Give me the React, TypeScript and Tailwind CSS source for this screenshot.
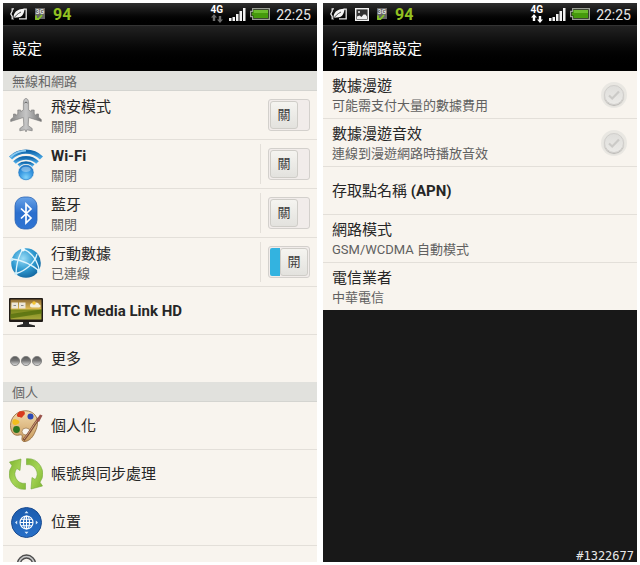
import type { ReactNode } from "react";
import { useState } from "react";

/* ---------- status bar icons ---------- */

function LeafBatteryIcon() {
  return (
    <svg width="17" height="12" viewBox="0 0 17 12" aria-hidden="true">
      <path d="M4 .8H2.2v2.400L.8 6l1.400 2.500v2.300H4M13.500 1.200h2.700v9.600H9" fill="none" stroke="#e8e8e8" strokeWidth="1.300" />
      <path d="M3.600 10.200C3.200 5 6.500 1 14.500.800 14.300 6.500 11.500 10 5.800 9.500Z" fill="#f5f5f5" />
      <path d="M3 11.500C5 8 7.500 5.800 11 4" stroke="#222" strokeWidth=".8" fill="none" />
    </svg>
  );
}

function PictureIcon() {
  return (
    <svg width="14" height="13" viewBox="0 0 14 13" aria-hidden="true">
      <rect x=".7" y=".7" width="12.600" height="11.600" fill="#333" stroke="#f2f2f2" strokeWidth="1.400" />
      <path d="M2 11V8.500L4.500 7.500l2 1.500 2-2.500h2L12 8.500V11Z" fill="#f2f2f2" />
      <circle cx="4" cy="4" r="1" fill="#f2f2f2" />
    </svg>
  );
}

function NetworkCheckIcon() {
  return (
    <svg width="10" height="12" viewBox="0 0 10 12" aria-hidden="true">
      <rect width="10" height="11" fill="#666" />
      <text x="0.5" y="6" fontSize="7" fontWeight="700" fill="#ddd" fontFamily="Roboto, sans-serif">3G</text>
      <path d="M1 7.500v3.500h2.500L7 7" fill="none" stroke="#86c22a" strokeWidth="1.800" />
    </svg>
  );
}

function DataArrowsIcon({ active }: { active: boolean }) {
  return (
    <svg width="12" height="9" viewBox="0 0 12 9" fill={active ? "#fff" : "#6d6d6d"} aria-hidden="true">
      <path d="M3 0 6 3.500H4.200V7H1.800V3.500H0Z" />
      <path d="M9 9 12 5.500h-1.800V2H7.800v3.500H6Z" />
    </svg>
  );
}

function SignalIcon() {
  return (
    <svg width="17" height="13" viewBox="0 0 17 13" fill="#f2f2f2" aria-hidden="true">
      <rect x="0" y="10" width="2.500" height="3" />
      <rect x="3.500" y="9" width="2.500" height="4" />
      <rect x="7" y="6" width="2.500" height="7" />
      <rect x="10.500" y="3" width="2.500" height="10" />
      <rect x="14" y="0" width="2.500" height="13" />
    </svg>
  );
}

function BatteryIcon() {
  return (
    <svg width="20" height="12" viewBox="0 0 20 12" aria-hidden="true">
      <path d="M2.600.600h16.800v10.800H2.600V8.600H.600V3.400h2Z" fill="#1c2a10" stroke="#9a9f96" strokeWidth="1.200" />
      <rect x="3.500" y="2" width="14.500" height="8" fill="#459a0c" />
      <rect x="3.500" y="2" width="14.500" height="3" fill="#6cbd2e" />
      <rect x="2" y="4.500" width="2" height="3" fill="#459a0c" />
    </svg>
  );
}

/* ---------- list icons ---------- */

function IconFrame({ children }: { children: ReactNode }) {
  return (
    <svg width="34" height="34" viewBox="0 0 34 34" className="shrink-0" aria-hidden="true">
      {children}
    </svg>
  );
}

function PlaneIcon() {
  return (
    <IconFrame>
      <defs>
        <linearGradient id="plane" x1="0" x2="1">
          <stop offset="0" stopColor="#868686" />
          <stop offset=".5" stopColor="#c6c6c6" />
          <stop offset="1" stopColor="#747474" />
        </linearGradient>
      </defs>
      <path
        d="M17 .500c1.700 0 2.600 2 2.600 4.500v6.800l2.700 2V12h2.900v4l2.300 1.600V16h2v3.200l2.800 2.300v2L19.700 19.500 19.200 27.500l4 3V32.800L17.700 31.800 17 34l-.700-2.200-5.500 1v-2.300l4-3-.500-8L1.700 23.500v-2l2.800-2.300V16h2v1.600L8.800 16v-4h2.900v1.800l2.700-2V5C14.400 2.500 15.300.500 17 .500Z"
        fill="url(#plane)" stroke="#777" strokeWidth=".6"
      />
      <path d="M15.500 5 17 4l1.500 1" stroke="#555" strokeWidth=".9" fill="none" />
    </IconFrame>
  );
}

function WifiIcon() {
  return (
    <IconFrame>
      <defs>
        <linearGradient id="wave" x1="0" y1="0" x2="0" y2="1">
          <stop offset="0" stopColor="#1269ae" />
          <stop offset="1" stopColor="#4aa8e4" />
        </linearGradient>
        <radialGradient id="ball" cx=".5" cy=".8" r=".8">
          <stop offset="0" stopColor="#7fd2fb" />
          <stop offset=".5" stopColor="#3a9ae2" />
          <stop offset="1" stopColor="#1f74c2" />
        </radialGradient>
      </defs>
      <g fill="none" stroke="url(#wave)">
        <path d="M1.500 11A22 22 0 0 1 32.500 11" strokeWidth="4.400" />
        <path d="M5.500 15.500A16.500 16.500 0 0 1 28.500 15.500" strokeWidth="3.800" />
        <path d="M9.500 18.500A11.500 11.500 0 0 1 24.500 18.500" strokeWidth="3" />
      </g>
      <path d="M1.500 10.200A22 22 0 0 1 17 3.600" fill="none" stroke="#8cccf2" strokeWidth="1.600" />
      <circle cx="17" cy="25.500" r="8" fill="url(#ball)" stroke="#f8f4ee" strokeWidth="1" />
      <circle cx="17" cy="25.500" r="7.300" fill="none" stroke="#2a7cc4" strokeWidth=".6" />
      <ellipse cx="17" cy="22.300" rx="4.600" ry="2.600" fill="#fff" opacity=".35" />
    </IconFrame>
  );
}

function BluetoothIcon() {
  return (
    <IconFrame>
      <defs>
        <linearGradient id="bt" x1="0" y1="0" x2="0" y2="1">
          <stop offset="0" stopColor="#69a3e8" />
          <stop offset=".5" stopColor="#2b6fce" />
          <stop offset="1" stopColor="#2f74d2" />
        </linearGradient>
      </defs>
      <rect x="6" y="1" width="22" height="32" rx="9" fill="url(#bt)" stroke="#2a63b4" strokeWidth=".8" />
      <path d="M12 12.500 22 22 17 27V8l5 5-10 9.500" fill="none" stroke="#fff" strokeWidth="1.700" />
    </IconFrame>
  );
}

function GlobeIcon() {
  return (
    <IconFrame>
      <defs>
        <radialGradient id="globe" cx=".4" cy=".35" r=".75">
          <stop offset="0" stopColor="#9adcf6" />
          <stop offset=".5" stopColor="#319cd2" />
          <stop offset="1" stopColor="#0c5b96" />
        </radialGradient>
      </defs>
      <circle cx="17" cy="18" r="14.800" fill="url(#globe)" />
      <g fill="none" stroke="#e0f5fd" strokeWidth="1.300">
        <path d="M14 4C10 10 7.500 18 7 28.500" />
        <path d="M3 14C12 15 23 20 30.500 26" />
        <path d="M14 4C22 7 28 14 30.500 26" />
        <path d="M7 28.500C16 26 26 18 28 9" />
      </g>
      <circle cx="14" cy="4.500" r="2" fill="#f2fcff" />
      <circle cx="3" cy="14.500" r="1.600" fill="#c9effc" />
      <circle cx="30" cy="26" r="2" fill="#dff6ff" />
      <circle cx="7" cy="28.500" r="1.600" fill="#c9effc" />
    </IconFrame>
  );
}

function TvIcon() {
  return (
    <IconFrame>
      <defs>
        <linearGradient id="field" x1="0" y1="0" x2="0" y2="1">
          <stop offset="0" stopColor="#8e6c35" />
          <stop offset=".45" stopColor="#dcb850" />
          <stop offset=".55" stopColor="#7c8a1e" />
          <stop offset="1" stopColor="#a8a83a" />
        </linearGradient>
      </defs>
      <rect x="0" y="4" width="34" height="24" rx="1" fill="#211c18" />
      <rect x="1.500" y="5.500" width="31" height="20" fill="url(#field)" />
      <path d="M1.500 20 32.500 15.500v4L1.500 24.500Z" fill="#56700f" opacity=".8" />
      <rect x="2.500" y="8.500" width="6.500" height="6" fill="#ece6d8" />
      <rect x="10" y="8.500" width="6.500" height="6" fill="#ece6d8" />
      <path d="M4.500 11.500H7M12 11.500h2.500" stroke="#888" strokeWidth="1.200" />
      <path d="M21 11.500c0-2 2-3 4-2 1-2 5-1 5 1 2 0 2 3 0 3h-7c-1.500 0-2-1-2-2Z" fill="#f5efd9" />
      <circle cx="25" cy="9" r="1.800" fill="#f4c430" />
      <path d="M14 28h6v2l6 1.500V33H8v-1.500l6-1.500Z" fill="#2a2a2a" />
    </IconFrame>
  );
}

function DotsIcon() {
  return (
    <IconFrame>
      <defs>
        <linearGradient id="dot" x1="0" y1="0" x2="0" y2="1">
          <stop offset="0" stopColor="#555" />
          <stop offset=".45" stopColor="#777" />
          <stop offset="1" stopColor="#dcdcdc" />
        </linearGradient>
      </defs>
      {[6, 17, 28].map((cx) => (
        <circle key={cx} cx={cx} cy="19" r="4.600" fill="url(#dot)" stroke="#7a7a7a" strokeWidth=".8" />
      ))}
    </IconFrame>
  );
}

function PaletteIcon() {
  return (
    <IconFrame>
      <defs>
        <linearGradient id="wood" x1="0" y1="0" x2="0" y2="1">
          <stop offset="0" stopColor="#f3dcae" />
          <stop offset="1" stopColor="#c99a5d" />
        </linearGradient>
      </defs>
      <path
        d="M14 2C22 .500 28.500 6 28.500 13c0 4-1 7-2.500 10-1.500 4-5 9-10 9.500-3 .300-3.500-2-2.800-4.500.500-2-1-2.500-3-2C5 27.500 1.500 23 1.500 16.500 1.500 9 7 3 14 2Z"
        fill="url(#wood)" stroke="#8d6436" strokeWidth=".8"
      />
      <ellipse cx="17" cy="22.500" rx="4" ry="3.500" fill="#f8f4ee" stroke="#9b7444" strokeWidth=".7" />
      <path d="M9 4c2-3 4-1 5-2 3 1 2 4 0 5-1 3-3 1-4 1-2 0-3-2-1-4Z" fill="#d93a1c" />
      <circle cx="21.500" cy="7.500" r="3" fill="#2c49b5" />
      <path d="M3.500 12c1-3 4-1 5-1 3 1 2 4 0 4-2 2-6 1-5-3Z" fill="#f2bd1d" />
      <circle cx="7.500" cy="20.500" r="3.400" fill="#2c7420" />
      <path d="M14.500 31C20 25 24 17 30 9" stroke="#7c4d37" strokeWidth="2.600" fill="none" />
      <path d="M15 30C20 24 24 17 29 10" stroke="#d9a684" strokeWidth=".9" fill="none" />
      <path d="M27 11.500 31 5.500l2.500 1L30 13Z" fill="#99534b" />
    </IconFrame>
  );
}

function SyncIcon() {
  const arrow =
    "M18 32.300A15 15 0 0 1 4.500 8.800L2 5 13.500 2 12.500 13.500 9.300 11.500A9.300 9.300 0 0 0 18 26.300Z";
  return (
    <IconFrame>
      <defs>
        <linearGradient id="sync" x1="0" y1="0" x2="1" y2="1">
          <stop offset="0" stopColor="#7fb52f" />
          <stop offset=".5" stopColor="#a5d455" />
          <stop offset="1" stopColor="#84bb38" />
        </linearGradient>
      </defs>
      <g fill="url(#sync)" stroke="#74a83a" strokeWidth=".6" strokeLinejoin="round">
        <path d={arrow} transform="translate(-1.500 0)" />
        <path d={arrow} transform="rotate(180 17 17) translate(-1.500 0)" />
      </g>
    </IconFrame>
  );
}

function LocationIcon() {
  return (
    <IconFrame>
      <defs>
        <linearGradient id="loc" x1="0" y1="0" x2="0" y2="1">
          <stop offset="0" stopColor="#1c5cae" />
          <stop offset="1" stopColor="#2870c8" />
        </linearGradient>
      </defs>
      <circle cx="17.500" cy="17.500" r="15" fill="url(#loc)" stroke="#1b4c90" strokeWidth="1" />
      <g fill="none" stroke="#fff" strokeWidth="1.100">
        <circle cx="17.500" cy="17.500" r="6.500" />
        <ellipse cx="17.500" cy="17.500" rx="3" ry="6.500" />
        <path d="M17.500 11v13M11 17.500h13M12 14.300h11M12 20.700h11" />
      </g>
      <path d="m17.500 6-2 2.200h4ZM17.500 29l-2-2.200h4ZM6 17.500l2.200-2v4ZM29 17.500l-2.200-2v4Z" fill="#d6e8fb" />
    </IconFrame>
  );
}

function LockIcon() {
  return (
    <IconFrame>
      <path d="M10 18v-7a7.500 7.500 0 0 1 15 0v7" fill="none" stroke="#4c4c4c" strokeWidth="4.400" />
      <path d="M10 18v-7a7.500 7.500 0 0 1 15 0v7" fill="none" stroke="#c9c9c9" strokeWidth="1.600" />
      <rect x="6" y="15" width="23" height="17" rx="3" fill="#d9a93a" />
    </IconFrame>
  );
}

/* ---------- building blocks ---------- */

function Phone({ label, children }: { label: string; children: ReactNode }) {
  return (
    <section aria-label={label} className="flex min-w-0 flex-1 flex-col overflow-hidden bg-[#181818]">
      {children}
    </section>
  );
}

function StatusBar({ picture = false, active = false }: { picture?: boolean; active?: boolean }) {
  return (
    <div className="flex h-[22px] shrink-0 items-center justify-between bg-linear-to-b from-[#303030] to-black pr-1.5 pl-[7px]">
      <div className="flex items-center gap-2">
        <LeafBatteryIcon />
        {picture && <PictureIcon />}
        <NetworkCheckIcon />
        <span className="pt-px text-base leading-5 font-bold text-[#93c121]">94</span>
      </div>
      <div className="flex items-center gap-1">
        <div className="flex flex-col items-center pr-0.5">
          <span className="text-[10px] leading-[9px] font-bold text-white">4G</span>
          <DataArrowsIcon active={active} />
        </div>
        <SignalIcon />
        <BatteryIcon />
        <time className="pt-px pl-0.5 text-sm leading-5 text-[#e8e8e8]">22:25</time>
      </div>
    </div>
  );
}

function TitleBar({ children }: { children: ReactNode }) {
  return (
    <header className="flex h-[46px] shrink-0 items-center border-t border-[#333] bg-linear-to-b from-[#222] to-black px-[9px]">
      <h1 className="text-[15px] leading-5 text-white">{children}</h1>
    </header>
  );
}

function SectionHeader({ children }: { children: ReactNode }) {
  return (
    <h2 className="h-5 border-b border-[#d4d4d0] bg-[#e1e1dd] px-[9px] text-[13px] leading-[21px] text-[#666]">
      {children}
    </h2>
  );
}

function RowText({ title, detail }: { title: ReactNode; detail?: string }) {
  return (
    <span className={"flex min-w-0 flex-col " + (detail ? "pt-[3px]" : "")}>
      <span className="text-[15px] leading-5 text-[#262626]">{title}</span>
      {detail && <span className="text-[13px] leading-5 text-[#606060]">{detail}</span>}
    </span>
  );
}

function Toggle({ label, initial = false }: { label: string; initial?: boolean }) {
  const [on, setOn] = useState(initial);
  return (
    <button
      type="button"
      role="switch"
      aria-checked={on}
      aria-label={label}
      onClick={() => setOn(!on)}
      className="flex h-8 w-[42px] items-stretch rounded-[3px] border border-[#d3d0cc] bg-[#f1ecea] p-px"
    >
      {on && <span className="flex-1 rounded-l-[2px] bg-[#33b3e0]" />}
      <span className="flex w-7 items-center justify-center rounded-[3px] border border-[#cfcdc8] bg-linear-to-b from-[#f5f4f0] to-[#e3e2de] text-[13px] leading-5 text-[#3c3c3c]">
        {on ? "開" : "關"}
      </span>
    </button>
  );
}

type ToggleRowProps = {
  icon: ReactNode;
  name: string;
  title?: ReactNode;
  detail: string;
  on?: boolean;
  divided?: boolean;
};

function ToggleRow({ icon, name, title = name, detail, on, divided = true }: ToggleRowProps) {
  return (
    <li className="flex h-[49px] items-center border-b border-[#e3dfd9] pr-[7px] pl-1.5">
      <button type="button" className="flex min-w-0 flex-1 items-center gap-2 text-left">
        {icon}
        <RowText title={title} detail={detail} />
      </button>
      <div className={"flex h-10 items-center pl-[7px] " + (divided ? "border-l border-[#e3dfd9]" : "")}>
        <Toggle label={name} initial={on} />
      </div>
    </li>
  );
}

function LinkRow({ icon, title, label }: { icon: ReactNode; title?: ReactNode; label?: string }) {
  return (
    <li className="h-12 border-b border-[#e3dfd9] last:h-[47px] last:border-b-0">
      <button type="button" aria-label={label} className="flex size-full items-center gap-2 px-1.5 text-left">
        {icon}
        {title && <RowText title={title} />}
      </button>
    </li>
  );
}

function CheckRow({ id, title, detail }: { id: string; title: string; detail: string }) {
  return (
    <li className="flex h-12 items-center justify-between border-b border-[#e3dfd9] pr-2.5 pl-[9px]">
      <label htmlFor={id}>
        <RowText title={title} detail={detail} />
      </label>
      <span className="grid size-[26px] place-items-center rounded-full bg-[#e9e7e2]">
        <input
          id={id}
          type="checkbox"
          className="peer col-start-1 row-start-1 size-5 appearance-none rounded-full border border-[#d0cecb] bg-linear-to-b from-[#dfdedb] to-[#ebeae7] shadow-[0_1px_1px_#b5b3b0]"
        />
        <svg
          width="14"
          height="12"
          viewBox="0 0 14 12"
          className="pointer-events-none col-start-1 row-start-1 text-[#cbcac7] peer-checked:text-[#33b3e0]"
          aria-hidden="true"
        >
          <path d="m2 6.500 3.200 3L12 2.500" fill="none" stroke="currentColor" strokeWidth="2.200" />
        </svg>
      </span>
    </li>
  );
}

function TextRow({ title, detail }: { title: ReactNode; detail?: string }) {
  return (
    <li className="h-12 border-b border-[#e3dfd9] last:h-[47px] last:border-b-0">
      <button type="button" className="flex size-full items-center px-[9px] text-left">
        <RowText title={title} detail={detail} />
      </button>
    </li>
  );
}

/* ---------- page ---------- */

export default function App() {
  return (
    <main className="flex h-screen gap-1.5 bg-white p-[3px] font-[Roboto,'Noto_Sans_CJK_TC',sans-serif]">
      <Phone label="設定">
        <StatusBar />
        <TitleBar>設定</TitleBar>
        <div className="min-h-0 flex-1 overflow-hidden bg-[#f8f4ee]">
          <SectionHeader>無線和網路</SectionHeader>
          <ul>
            <ToggleRow icon={<PlaneIcon />} name="飛安模式" detail="關閉" divided={false} />
            <ToggleRow icon={<WifiIcon />} name="Wi-Fi" title={<b>Wi-Fi</b>} detail="關閉" />
            <ToggleRow icon={<BluetoothIcon />} name="藍牙" detail="關閉" />
            <ToggleRow icon={<GlobeIcon />} name="行動數據" detail="已連線" on />
            <LinkRow icon={<TvIcon />} title={<b>HTC Media Link HD</b>} />
            <LinkRow icon={<DotsIcon />} title="更多" />
          </ul>
          <SectionHeader>個人</SectionHeader>
          <ul>
            <LinkRow icon={<PaletteIcon />} title="個人化" />
            <LinkRow icon={<SyncIcon />} title="帳號與同步處理" />
            <LinkRow icon={<LocationIcon />} title="位置" />
            <LinkRow icon={<LockIcon />} label="安全性" />
          </ul>
        </div>
      </Phone>

      <Phone label="行動網路設定">
        <StatusBar picture active />
        <TitleBar>行動網路設定</TitleBar>
        <ul className="bg-[#f8f4ee]">
          <CheckRow id="roaming" title="數據漫遊" detail="可能需支付大量的數據費用" />
          <CheckRow id="roaming-sound" title="數據漫遊音效" detail="連線到漫遊網路時播放音效" />
          <TextRow title={<>存取點名稱 <b>(APN)</b></>} />
          <TextRow title="網路模式" detail="GSM/WCDMA 自動模式" />
          <TextRow title="電信業者" detail="中華電信" />
        </ul>
        <p className="mt-auto self-end pr-[3px] font-['DejaVu_Sans_Mono',monospace] text-xs leading-3 text-[#e8e8e8]">
          #1322677
        </p>
      </Phone>
    </main>
  );
}
